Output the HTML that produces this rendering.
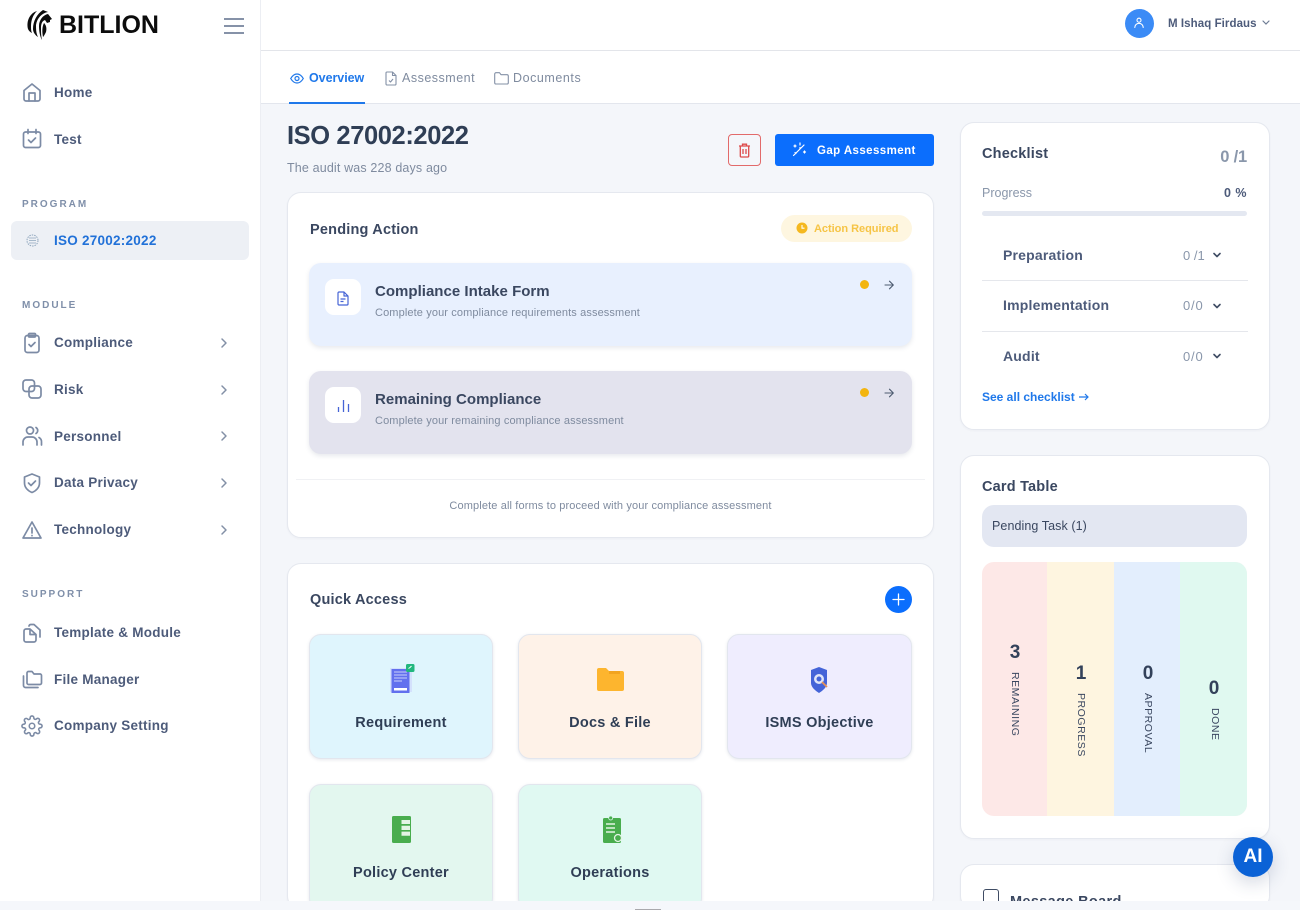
<!DOCTYPE html>
<html><head><meta charset="utf-8"><style>
html,body{margin:0;padding:0;width:1300px;height:910px;overflow:hidden;background:#f4f6fa;font-family:"Liberation Sans",sans-serif}
#p{position:relative;width:1300px;height:910px;overflow:hidden}
.a{position:absolute;box-sizing:border-box}
.t{position:absolute;white-space:nowrap;line-height:20px;height:20px}
svg{position:absolute;overflow:visible}
.n{left:54px;font-size:13.5px;font-weight:bold;color:#4d5b7a;letter-spacing:.25px;margin-top:1px}
.h{left:22px;font-size:10px;font-weight:bold;color:#7f8fa9;letter-spacing:2px;margin-top:1px}
.i{left:21px;width:22px;height:22px;fill:none;stroke:#7c8ba5;stroke-width:1.7;stroke-linecap:round;stroke-linejoin:round}
.c{left:219px;width:10px;height:10px;fill:none;stroke:#8390a6;stroke-width:1.5;stroke-linecap:round;stroke-linejoin:round}
.card{background:#fff;border:1px solid #e5e8ef;border-radius:14px;box-shadow:0 1px 2px rgba(40,50,80,.04)}
.tt{font-size:14.5px;font-weight:bold;color:#3a4760;letter-spacing:.2px;margin-top:1px}
.row{left:309px;width:603px;height:83px;border-radius:12px;box-shadow:0 2px 5px rgba(60,70,110,.12)}
.ib{left:325px;width:36px;height:36px;background:#fff;border-radius:9px}
.rs{left:375px;font-size:11px;color:#7f8b9f;letter-spacing:.12px;margin-top:1px}
.tile{border-radius:12px;border:1px solid #e2e6ee;box-shadow:0 1px 3px rgba(60,70,110,.12)}
.tl{font-size:14.5px;font-weight:bold;color:#2f3e55;text-align:center;letter-spacing:.25px;margin-top:1px}
.ck{left:1003px;font-size:14px;font-weight:bold;color:#4d5b7a;letter-spacing:.2px}
.cv{left:1183px;font-size:13px;color:#8a97ab}
.cc{left:1212px;width:10px;height:10px;fill:none;stroke:#3f4c64;stroke-width:1.6;stroke-linecap:round;stroke-linejoin:round}
.num{font-size:19px;font-weight:bold;color:#33415a;text-align:center;width:40px;margin-top:1px}
.vt{font-size:10.5px;color:#3a4760;letter-spacing:.55px;writing-mode:vertical-rl;white-space:nowrap;line-height:12px;position:absolute}
</style></head><body><div id="p">

<!-- top bars -->
<div class="a" style="left:261px;top:0;width:1039px;height:51px;background:#fff;border-bottom:1px solid #e3e5ea"></div>
<div class="a" style="left:261px;top:51px;width:1039px;height:53px;background:#fff;border-bottom:1px solid #e3e6ed"></div>

<!-- sidebar -->
<div class="a" style="left:0;top:0;width:261px;height:910px;background:#fff;border-right:1px solid #eceef3"></div>
<svg style="left:26px;top:9px" width="27" height="31" viewBox="0 0 27 31" fill="#0c0c0c">
<path d="M2 20C0 12 4 4 11 2 7 6 5 11 5 17c0 3 0 5 1 7-2-1-3-2-4-4z"/>
<path d="M7 20C7 12 11 5 17 1l5 2C16 4 11 9 10 16c0 4 0 8 2 12-3-2-5-5-5-8z"/>
<path d="M13 17c0-6 4-11 9-12l4 5-2 1v2l-3 1-2-3c-3 1-4 4-4 8 0 4 0 8 1 12-2-3-3-9-3-14z"/>
<path d="M18 14c2 2 3 5 2 9-1 2-2 4-3 5-1-5-1-10 1-14z"/>
</svg>
<div class="t" style="left:59px;top:15px;font-size:25px;font-weight:bold;color:#0c0c0c">BITLION</div>
<svg style="left:224px;top:18px" width="20" height="16" fill="none" stroke="#5f6f8c" stroke-width="1.6"><path d="M0 1h20M0 8h20M0 15h20"/></svg>

<svg class="i" style="top:81px" viewBox="0 0 22 22"><path d="M3 9.500L11 3l8 6.500V18a2 2 0 0 1-2 2H5a2 2 0 0 1-2-2z"/><path d="M8 20v-8h6v8"/></svg>
<div class="t n" style="top:82px">Home</div>
<svg class="i" style="top:128px" viewBox="0 0 22 22"><rect x="2.500" y="4" width="17" height="15.500" rx="2"/><path d="M7 1.500v4M15 1.500v4M7.500 12l2.500 2.500 4.500-4.500"/></svg>
<div class="t n" style="top:129px">Test</div>

<div class="t h" style="top:194px">PROGRAM</div>
<div class="a" style="left:11px;top:221px;width:238px;height:39px;background:#edf0f5;border-radius:6px"></div>
<svg style="left:26px;top:232px" width="13" height="17" viewBox="0 0 13 17" fill="none" stroke="#8fa6bd" stroke-width="1"><circle cx="6.500" cy="8.500" r="5.500" stroke-dasharray="1.500 1"/><path d="M3 6h7M3 8.500h7M3 11h7" stroke-width=".8"/></svg>
<div class="t n" style="top:230px;color:#2171d8">ISO 27002:2022</div>

<div class="t h" style="top:295px">MODULE</div>
<svg class="i" style="top:332px" viewBox="0 0 22 22"><rect x="4" y="3.500" width="14" height="17" rx="2.500"/><rect x="7.500" y="1.500" width="7" height="3.500" rx="1"/><path d="M8 12.500l2 2 4-4"/></svg>
<div class="t n" style="top:332px">Compliance</div>
<svg class="c" style="top:338px" viewBox="0 0 10 10"><path d="M3 1l4 4-4 4"/></svg>
<svg class="i" style="top:378px" viewBox="0 0 22 22"><rect x="2" y="2" width="11.500" height="11.500" rx="3"/><rect x="8" y="8" width="12" height="12" rx="3"/></svg>
<div class="t n" style="top:379px">Risk</div>
<svg class="c" style="top:385px" viewBox="0 0 10 10"><path d="M3 1l4 4-4 4"/></svg>
<svg class="i" style="top:425px" viewBox="0 0 22 22"><circle cx="9" cy="5.500" r="3.500"/><path d="M2 20v-3a5 5 0 0 1 5-5h4a5 5 0 0 1 5 5v3M15 2.500a3.500 3.500 0 0 1 0 6M18 12.500a5 5 0 0 1 2.500 4.500v3"/></svg>
<div class="t n" style="top:426px">Personnel</div>
<svg class="c" style="top:431px" viewBox="0 0 10 10"><path d="M3 1l4 4-4 4"/></svg>
<svg class="i" style="top:472px" viewBox="0 0 22 22"><path d="M11 2l7.500 3v6c0 4.500-3.500 8-7.500 9.500C7 19 3.500 15.500 3.500 11V5z"/><path d="M7.500 11l2.500 2.500 4.500-4.500"/></svg>
<div class="t n" style="top:472px">Data Privacy</div>
<svg class="c" style="top:478px" viewBox="0 0 10 10"><path d="M3 1l4 4-4 4"/></svg>
<svg class="i" style="top:519px" viewBox="0 0 22 22"><path d="M11 3l9 16H2z"/><path d="M11 9v5M11 16.500v.2"/></svg>
<div class="t n" style="top:519px">Technology</div>
<svg class="c" style="top:525px" viewBox="0 0 10 10"><path d="M3 1l4 4-4 4"/></svg>

<div class="t h" style="top:584px">SUPPORT</div>
<svg class="i" style="top:622px" viewBox="0 0 22 22"><path d="M3 9a2 2 0 0 1 2-2h4l6 5.500V18a2 2 0 0 1-2 2H5a2 2 0 0 1-2-2zM9 7.500V12.500h6M8 4a2 2 0 0 1 2-1.500h3l6 5.500v7"/></svg>
<div class="t n" style="top:622px">Template &amp; Module</div>
<svg class="i" style="top:668px" viewBox="0 0 22 22"><path d="M6 5a1.500 1.500 0 0 1 1.500-1.500h3.500l2 2.500h6a1.500 1.500 0 0 1 1.500 1.500V15a1.500 1.500 0 0 1-1.500 1.500H7.500A1.500 1.500 0 0 1 6 15zM2.500 8v9.500a2 2 0 0 0 2 2H17"/></svg>
<div class="t n" style="top:669px">File Manager</div>
<svg class="i" style="top:715px" viewBox="0 0 24 24"><circle cx="12" cy="12" r="3"/><path d="M19.400 15a1.650 1.650 0 0 0 .33 1.820l.06.06a2 2 0 1 1-2.830 2.830l-.06-.06a1.650 1.650 0 0 0-2.820 1.170V21a2 2 0 1 1-4 0v-.09a1.650 1.650 0 0 0-2.820-1.170l-.06.06a2 2 0 1 1-2.830-2.830l.06-.06A1.650 1.650 0 0 0 3.090 14H3a2 2 0 1 1 0-4h.09a1.650 1.650 0 0 0 1.170-2.820l-.06-.06a2 2 0 1 1 2.830-2.830l.06.06A1.650 1.650 0 0 0 10 3.090V3a2 2 0 1 1 4 0v.09a1.650 1.650 0 0 0 2.820 1.170l.06-.06a2 2 0 1 1 2.830 2.830l-.06.06A1.650 1.650 0 0 0 20.910 10H21a2 2 0 1 1 0 4h-.09a1.650 1.650 0 0 0-1.510 1z"/></svg>
<div class="t n" style="top:715px">Company Setting</div>

<!-- header user -->
<div class="a" style="left:1125px;top:9px;width:29px;height:29px;border-radius:50%;background:#3b8bf6"></div>
<svg style="left:1133px;top:17px" width="12" height="12" fill="none" stroke="#fff" stroke-width="1.100" stroke-linecap="round"><circle cx="6" cy="3.200" r="2"/><path d="M1.800 10.500a4.200 4.200 0 0 1 8.400 0"/></svg>
<div class="t" style="left:1168px;top:14px;font-size:11.500px;font-weight:bold;color:#4d5b7a;letter-spacing:.07px">M Ishaq Firdaus</div>
<svg style="left:1262px;top:20px" width="8" height="6" fill="none" stroke="#6e7c94" stroke-width="1.200" stroke-linecap="round"><path d="M1 1l3 3 3-3"/></svg>

<!-- tabs -->
<svg style="left:290px;top:72px" width="14" height="13" viewBox="0 0 14 13" fill="none" stroke="#1f78ea" stroke-width="1.200"><path d="M.7 6.500C2.500 3.500 4.500 2 7 2s4.500 1.500 6.300 4.500C11.500 9.500 9.500 11 7 11S2.500 9.500.7 6.500z"/><circle cx="7" cy="6.500" r="2"/></svg>
<div class="t" style="left:309px;top:68px;font-size:12.500px;font-weight:bold;color:#1f78ea;letter-spacing:-.05px">Overview</div>
<div class="a" style="left:289px;top:102px;width:76px;height:2px;background:#1f78ea"></div>
<svg style="left:385px;top:71px" width="12" height="15" viewBox="0 0 12 15" fill="none" stroke="#8390a6" stroke-width="1.100" stroke-linejoin="round"><path d="M1 2a1 1 0 0 1 1-1h5.500L11 4.500V13a1 1 0 0 1-1 1H2a1 1 0 0 1-1-1zM7.500 1v3.500H11M4 9.500l1.500 1.500 2.500-3"/></svg>
<div class="t" style="left:402px;top:68px;font-size:12.500px;color:#7f8b9f;letter-spacing:.5px">Assessment</div>
<svg style="left:494px;top:72px" width="15" height="13" viewBox="0 0 15 13" fill="none" stroke="#8390a6" stroke-width="1.100" stroke-linejoin="round"><path d="M.7 2a1.300 1.300 0 0 1 1.300-1.300h3.500l1.500 2h6a1.300 1.300 0 0 1 1.300 1.300v6.700A1.300 1.300 0 0 1 13 12H2a1.300 1.300 0 0 1-1.300-1.300z"/></svg>
<div class="t" style="left:513px;top:68px;font-size:12.500px;color:#7f8b9f;letter-spacing:.56px">Documents</div>

<!-- title -->
<div class="t" style="left:287px;top:126px;font-size:25.500px;font-weight:bold;color:#2f3e55;letter-spacing:-.4px">ISO 27002:2022</div>
<div class="t" style="left:287px;top:158px;font-size:12.500px;color:#7f8b9f;letter-spacing:.15px">The audit was 228 days ago</div>
<div class="a" style="left:728px;top:134px;width:33px;height:32px;border:1px solid #e26a6a;border-radius:4px"></div>
<svg style="left:738px;top:143px" width="13" height="15" viewBox="0 0 13 15" fill="none" stroke="#dd4b4b" stroke-width="1.300"><path d="M1 3h11M4.500 3V1.200h4V3M2.300 3v10a1 1 0 0 0 1 1h6.400a1 1 0 0 0 1-1V3M5 6v5M8 6v5"/></svg>
<div class="a" style="left:775px;top:134px;width:159px;height:32px;background:#0b6efd;border-radius:3px"></div>
<svg style="left:792px;top:142px" width="15" height="15" viewBox="0 0 15 15" fill="none" stroke="#fff" stroke-width="1.200" stroke-linecap="round"><path d="M1.500 13.500L12 3M4 11.500l-1-1M8 3V1M8 6.500V5.500M12.500 9v2M11.500 10h2M3 3v2M2 4h2"/></svg>
<div class="t" style="left:817px;top:141px;font-size:11.500px;font-weight:bold;color:#fff;letter-spacing:.42px">Gap Assessment</div>

<!-- Pending -->
<div class="a card" style="left:287px;top:192px;width:647px;height:346px"></div>
<div class="t tt" style="left:310px;top:219px">Pending Action</div>
<div class="a" style="left:781px;top:215px;width:131px;height:27px;background:#fef6e0;border-radius:14px"></div>
<svg style="left:796px;top:222px" width="12" height="12" viewBox="0 0 12 12"><circle cx="6" cy="6" r="5.500" fill="#f5b81f"/><path d="M6 3v3.200h2.500" stroke="#fff" stroke-width="1.100" fill="none"/></svg>
<div class="t" style="left:814px;top:219px;font-size:11px;font-weight:bold;color:#f6c445;letter-spacing:-.03px">Action Required</div>

<div class="a row" style="top:263px;background:#e8f0fe"></div>
<div class="a ib" style="top:279px"></div>
<svg style="left:337px;top:291px" width="12" height="15" viewBox="0 0 12 15" fill="none" stroke="#4664d6" stroke-width="1.200" stroke-linejoin="round"><path d="M1 2a1 1 0 0 1 1-1h5l4 4v8a1 1 0 0 1-1 1H2a1 1 0 0 1-1-1zM7 1v4h4M3.500 8h5M3.500 10.500h3"/></svg>
<div class="t tt" style="left:375px;top:281px;font-size:15px;letter-spacing:.02px">Compliance Intake Form</div>
<div class="t rs" style="top:302px">Complete your compliance requirements assessment</div>
<div class="a" style="left:860px;top:280px;width:9px;height:9px;border-radius:50%;background:#f3b50f"></div>
<svg style="left:884px;top:280px" width="10" height="10" fill="none" stroke="#4d5b70" stroke-width="1.100" stroke-linecap="round" stroke-linejoin="round"><path d="M1 5h8M5.500 1.200L9.300 5 5.500 8.800"/></svg>

<div class="a row" style="top:371px;background:#e3e3ee"></div>
<div class="a ib" style="top:387px"></div>
<svg style="left:337px;top:399px" width="13" height="14" fill="none" stroke="#4664d6" stroke-width="1.300"><path d="M1.500 8v5M6.500 1v12M11.500 5v8"/></svg>
<div class="t tt" style="left:375px;top:389px;font-size:15px;letter-spacing:.02px">Remaining Compliance</div>
<div class="t rs" style="top:410px">Complete your remaining compliance assessment</div>
<div class="a" style="left:860px;top:388px;width:9px;height:9px;border-radius:50%;background:#f3b50f"></div>
<svg style="left:884px;top:388px" width="10" height="10" fill="none" stroke="#4d5b70" stroke-width="1.100" stroke-linecap="round" stroke-linejoin="round"><path d="M1 5h8M5.500 1.200L9.300 5 5.500 8.800"/></svg>

<div class="a" style="left:296px;top:479px;width:629px;height:1px;background:#f0f1f4"></div>
<div class="t" style="left:296px;width:629px;top:496px;text-align:center;font-size:11px;color:#7f8b9f;letter-spacing:.13px">Complete all forms to proceed with your compliance assessment</div>

<!-- Quick access -->
<div class="a card" style="left:287px;top:563px;width:647px;height:347px"></div>
<div class="t tt" style="left:310px;top:589px">Quick Access</div>
<div class="a" style="left:885px;top:586px;width:27px;height:27px;border-radius:50%;background:#0b6efd"></div>
<svg style="left:892px;top:593px" width="13" height="13" stroke="#fff" stroke-width="1.300" stroke-linecap="round"><path d="M6.500 1v11M1 6.500h11"/></svg>

<div class="a tile" style="left:309px;top:634px;width:184px;height:125px;background:#dff5fd"></div>
<div class="a tile" style="left:518px;top:634px;width:184px;height:125px;background:#fef2e8"></div>
<div class="a tile" style="left:727px;top:634px;width:185px;height:125px;background:#efedfe"></div>
<div class="a tile" style="left:309px;top:784px;width:184px;height:126px;background:#e3f7ef"></div>
<div class="a tile" style="left:518px;top:784px;width:184px;height:126px;background:#e0f9f2"></div>

<svg style="left:386px;top:662px" width="30" height="32" viewBox="0 0 30 32"><rect x="4" y="6" width="22" height="24" fill="#cfd8fb" opacity=".7"/><rect x="5.500" y="7" width="18" height="24" fill="#6270ee"/><path d="M8 10h13M8 13h13M8 16h13M8 19h8" stroke="#c9d1fb" stroke-width="1"/><rect x="8" y="26" width="13" height="2.500" fill="#fff"/><rect x="20" y="2" width="8.500" height="8" rx="1.500" fill="#21b77e"/><path d="M22.500 6.500l1.500-1 1.500-1.500" stroke="#fff" stroke-width="1" fill="none"/></svg>
<svg style="left:597px;top:667px" width="27" height="25" viewBox="0 0 27 25"><path d="M0 3a2 2 0 0 1 2-2h7l3 3h13a2 2 0 0 1 2 2v16a2 2 0 0 1-2 2H2a2 2 0 0 1-2-2z" fill="#fdb52e"/><path d="M12 4h11v3H12z" fill="#f2a41f"/></svg>
<svg style="left:809px;top:666px" width="22" height="28" viewBox="0 0 22 28"><path d="M10 1l8 3v13c0 4-4 7.500-8 10C6 24.500 2 21 2 17V4z" fill="#4464d8"/><circle cx="10" cy="13" r="5" fill="#dfe5f8"/><circle cx="10" cy="13" r="2.500" fill="#4464d8"/><path d="M13 16l5 5" stroke="#e59157" stroke-width="1.800"/></svg>
<svg style="left:391px;top:815px" width="21" height="29" viewBox="0 0 21 29"><rect x="1" y="1" width="19" height="27" rx="1.500" fill="#49ad4e"/><path d="M10.500 5h8.500v4h-8.500zM10.500 10.700h8.500V15h-8.500zM10.500 16.600h8.500v4.100h-8.500z" fill="#e3f4e4"/></svg>
<svg style="left:602px;top:815px" width="20" height="29" viewBox="0 0 20 29"><rect x="1" y="3" width="18" height="25" rx="1.500" fill="#49ad4e"/><circle cx="8.700" cy="3" r="2" fill="#49ad4e" stroke="#e0f9f2" stroke-width=".8"/><path d="M4 9h9M4 13h9M4 17h9" stroke="#e3f4e4" stroke-width="1.500"/><circle cx="16" cy="23" r="3.500" fill="#49ad4e" stroke="#e3f4e4" stroke-width="1.300"/></svg>

<div class="t tl" style="left:309px;width:184px;top:712px">Requirement</div>
<div class="t tl" style="left:518px;width:184px;top:712px">Docs &amp; File</div>
<div class="t tl" style="left:727px;width:185px;top:712px">ISMS Objective</div>
<div class="t tl" style="left:309px;width:184px;top:862px">Policy Center</div>
<div class="t tl" style="left:518px;width:184px;top:862px">Operations</div>

<!-- Checklist -->
<div class="a card" style="left:960px;top:122px;width:310px;height:308px"></div>
<div class="t tt" style="left:982px;top:143px">Checklist</div>
<div class="t" style="left:1147px;width:100px;top:147px;text-align:right;font-size:16.500px;font-weight:bold;color:#8a97ab;letter-spacing:-.2px">0 /1</div>
<div class="t" style="left:982px;top:183px;font-size:12.500px;color:#8a97ab">Progress</div>
<div class="t" style="left:1147px;width:100px;top:183px;text-align:right;font-size:12.500px;font-weight:bold;color:#4d5b7a;letter-spacing:.5px">0 %</div>
<div class="a" style="left:982px;top:211px;width:265px;height:5px;border-radius:3px;background:#e4e8f1"></div>
<div class="t ck" style="top:245px">Preparation</div>
<div class="t cv" style="top:246px">0 /1</div>
<svg class="cc" style="top:250px" viewBox="0 0 10 10"><path d="M2 3.500l3 3 3-3"/></svg>
<div class="a" style="left:982px;top:280px;width:266px;height:1px;background:#e5e7ec"></div>
<div class="t ck" style="top:295px">Implementation</div>
<div class="t cv" style="top:296px;letter-spacing:.8px">0/0</div>
<svg class="cc" style="top:301px" viewBox="0 0 10 10"><path d="M2 3.500l3 3 3-3"/></svg>
<div class="a" style="left:982px;top:331px;width:266px;height:1px;background:#e5e7ec"></div>
<div class="t ck" style="top:346px">Audit</div>
<div class="t cv" style="top:347px;letter-spacing:.8px">0/0</div>
<svg class="cc" style="top:351px" viewBox="0 0 10 10"><path d="M2 3.500l3 3 3-3"/></svg>
<div class="t" style="left:982px;top:387px;font-size:12px;color:#1f78ea;font-weight:bold">See all checklist</div>
<svg style="left:1079px;top:393px" width="10" height="8" fill="none" stroke="#1f78ea" stroke-width="1.200"><path d="M0 4h9M6 1l3 3-3 3"/></svg>

<!-- Card Table -->
<div class="a card" style="left:960px;top:455px;width:310px;height:384px"></div>
<div class="t tt" style="left:982px;top:476px">Card Table</div>
<div class="a" style="left:982px;top:505px;width:265px;height:42px;border-radius:12px;background:#e3e7f2"></div>
<div class="t" style="left:992px;top:516px;font-size:12.500px;color:#3a4760;letter-spacing:.08px">Pending Task (1)</div>
<div class="a" style="left:982px;top:562px;width:265px;height:254px;border-radius:12px;overflow:hidden;background:#fde8e7">
<div class="a" style="left:65px;top:0;width:67px;height:254px;background:#fef5e0"></div>
<div class="a" style="left:132px;top:0;width:66px;height:254px;background:#e3eefd"></div>
<div class="a" style="left:198px;top:0;width:67px;height:254px;background:#e0f9f0"></div>
</div>
<div class="t num" style="left:995px;top:642px">3</div>
<div class="vt" style="left:1009px;top:672px">REMAINING</div>
<div class="t num" style="left:1061px;top:663px">1</div>
<div class="vt" style="left:1075px;top:693px">PROGRESS</div>
<div class="t num" style="left:1128px;top:663px">0</div>
<div class="vt" style="left:1142px;top:693px">APPROVAL</div>
<div class="t num" style="left:1194px;top:678px">0</div>
<div class="vt" style="left:1209px;top:708px">DONE</div>

<!-- Message board -->
<div class="a card" style="left:960px;top:864px;width:310px;height:46px"></div>
<div class="a" style="left:983px;top:889px;width:16px;height:16px;border:1.700px solid #3f4c64;border-radius:3px"></div>
<div class="t tt" style="left:1010px;top:891px;letter-spacing:.35px">Message Board</div>

<!-- bottom strip -->
<div class="a" style="left:0;top:901px;width:1300px;height:9px;background:#f5f7fb"></div>
<div class="a" style="left:635px;top:909px;width:26px;height:1px;background:#a9a9ad"></div>

<!-- AI -->
<div class="a" style="left:1233px;top:837px;width:40px;height:40px;border-radius:50%;background:#0b62d6;box-shadow:0 6px 18px rgba(40,60,110,.2)"></div>
<div class="t" style="left:1233px;width:40px;top:847px;text-align:center;font-size:19px;font-weight:bold;color:#fff">AI</div>

</div></body></html>
